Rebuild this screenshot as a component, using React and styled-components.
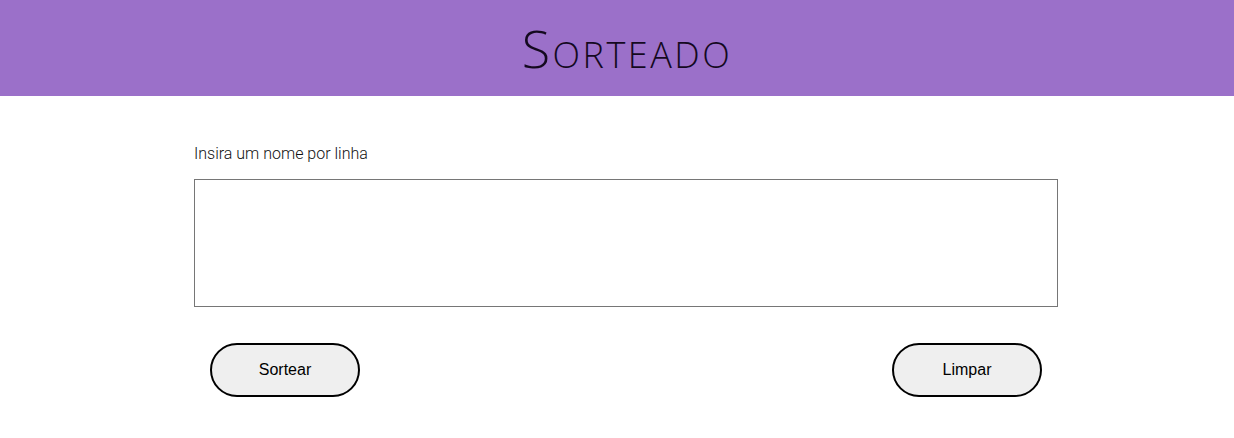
import React from 'react';
import styled, {createGlobalStyle} from 'styled-components';

const GlobalStyle = createGlobalStyle`
  body {
    margin: 0;
    background: #fff;
    font-family: Roboto, "Liberation Sans", sans-serif;
  }
`;

const Header = styled.header`
  height: 96px;
  background: #9b70c9;
  display: flex;
  align-items: center;
  justify-content: center;
`;

const Title = styled.h1`
  margin: 0;
  padding-left: 20px;
  font-family: "Open Sans", sans-serif;
  font-weight: 300;
  font-size: 52px;
  font-variant: small-caps;
  letter-spacing: 2.5px;
  color: #14091f;
  line-height: 1;
`;

const Main = styled.main`
  width: 864px;
  margin-left: 194px;
  padding-top: 48px;
`;

const Label = styled.label`
  display: block;
  font-size: 16px;
  font-weight: 300;
  color: #111;
  line-height: 19px;
  margin-bottom: 16px;
`;

const Names = styled.textarea`
  display: block;
  box-sizing: border-box;
  width: 864px;
  height: 128px;
  border: 1px solid #767676;
  resize: none;
  margin: 0;
`;

const Actions = styled.div`
  display: flex;
  justify-content: space-between;
  padding: 36px 16px 0;
`;

const Button = styled.button`
  width: 150px;
  height: 54px;
  border: 2px solid #000;
  border-radius: 27px;
  background: #efefef;
  font-family: "Liberation Sans", Arial, sans-serif;
  font-size: 16px;
  color: #000;
  cursor: pointer;
`;

const App = () => (
  <>
    <GlobalStyle />
    <Header>
      <Title>Sorteado</Title>
    </Header>
    <Main>
      <Label htmlFor="names">Insira um nome por linha</Label>
      <Names id="names" />
      <Actions>
        <Button>Sortear</Button>
        <Button>Limpar</Button>
      </Actions>
    </Main>
  </>
);

export default App;
